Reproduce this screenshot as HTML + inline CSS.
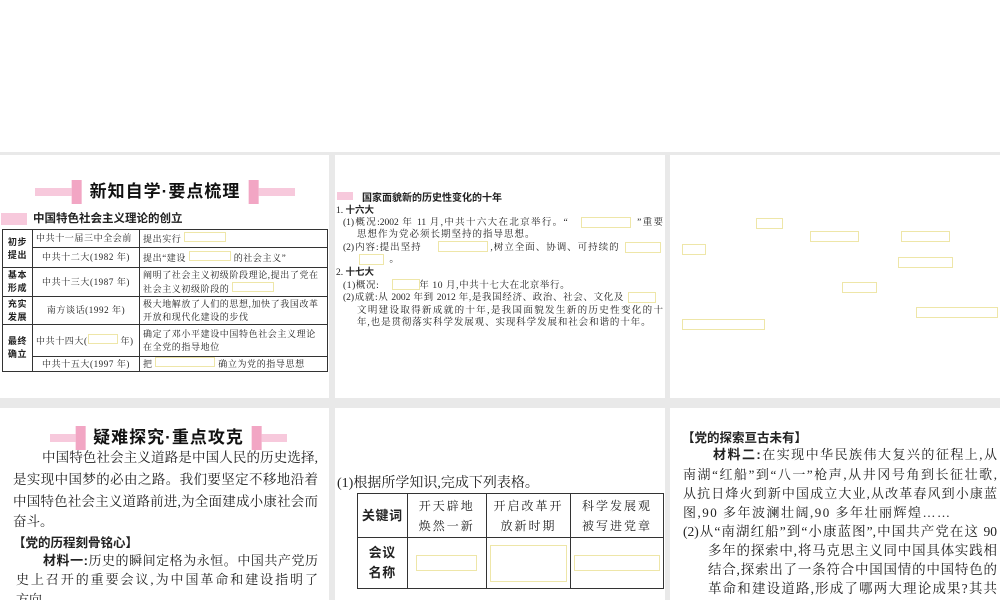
<!DOCTYPE html>
<html><head><meta charset="utf-8"><style>
*{margin:0;padding:0;box-sizing:border-box}
body{width:1000px;height:600px;background:#e9e9e9;position:relative;overflow:hidden;font-family:"Liberation Serif","Noto Serif CJK SC",serif;color:#222}
.top{position:absolute;left:0;top:0;width:1000px;height:152px;background:#fff}
.p{position:absolute;background:#fff;overflow:hidden}
.a{position:absolute;white-space:nowrap}
.j{position:absolute;white-space:nowrap;text-align:justify;text-align-last:justify;overflow:hidden}
.bx{position:absolute;border:1.5px solid #eee6a8;background:#fff}
.ban{position:absolute;height:24px;background:linear-gradient(#f7c9dc,#f7c9dc) center/100% 8px no-repeat}
.ban span{position:absolute;left:50%;top:0;transform:translateX(-50%);white-space:nowrap;background:#fff;border-left:10px solid #f2a6c4;border-right:10px solid #f2a6c4;padding:0 8px;height:24px;line-height:24px;font-family:"Liberation Sans","Noto Sans CJK SC",sans-serif;font-weight:bold;font-size:17px;letter-spacing:1px;color:#111}
.b{font-family:"Liberation Sans","Noto Sans CJK SC",sans-serif;font-weight:bold}
table{border-collapse:collapse;position:absolute}
td{border:1px solid #333;font-size:9px;padding:0 3px;line-height:13px;letter-spacing:0.6px}
.s{font-size:9.5px;line-height:12px}
.m{font-size:13.5px;line-height:20px}
.n{font-size:13px;line-height:18px}
</style></head><body>
<div class="top"></div>

<div class="p" style="left:0;top:155px;width:329px;height:243px">
 <div class="ban" style="left:35px;top:25px;width:260px"><span>新知自学·要点梳理</span></div>
 <div class="a" style="left:1px;top:58px;width:26px;height:12px;background:#f7c9dc"></div>
 <div class="a b" style="left:33px;top:55px;font-size:11.5px">中国特色社会主义理论的创立</div>
 <table style="left:2px;top:74px;width:326px;height:141px">
  <tr style="height:18px"><td rowspan="2" class="b" style="width:30px;text-align:center">初步<br>提出</td><td style="width:107px">中共十一届三中全会前</td><td>提出实行 <span style="display:inline-block;width:42px;height:10px;border:1px solid #eee6a8"></span></td></tr>
  <tr style="height:20px"><td style="text-align:center">中共十二大(1982 年)</td><td>提出“建设 <span style="display:inline-block;width:42px;height:10px;border:1px solid #eee6a8"></span> 的社会主义”</td></tr>
  <tr style="height:29px"><td class="b" style="text-align:center">基本<br>形成</td><td style="text-align:center">中共十三大(1987 年)</td><td>阐明了社会主义初级阶段理论,提出了党在社会主义初级阶段的 <span style="display:inline-block;width:42px;height:10px;border:1px solid #eee6a8"></span></td></tr>
  <tr style="height:28px"><td class="b" style="text-align:center">充实<br>发展</td><td style="text-align:center">南方谈话(1992 年)</td><td>极大地解放了人们的思想,加快了我国改革开放和现代化建设的步伐</td></tr>
  <tr style="height:32px"><td rowspan="2" class="b" style="text-align:center">最终<br>确立</td><td>中共十四大(<span style="display:inline-block;width:30px;height:10px;border:1px solid #eee6a8"></span> 年)</td><td>确定了邓小平建设中国特色社会主义理论在全党的指导地位</td></tr>
  <tr style="height:14px"><td style="text-align:center">中共十五大(1997 年)</td><td>把 <span style="display:inline-block;width:60px;height:10px;border:1px solid #eee6a8"></span> 确立为党的指导思想</td></tr>
 </table>
</div>

<div class="p" style="left:335px;top:155px;width:330px;height:243px">
 <div class="a" style="left:2px;top:37px;width:16px;height:8px;background:#f7c9dc"></div>
 <div class="a b" style="left:27px;top:34px;font-size:10px">国家面貌新的历史性变化的十年</div>
 <div class="a s" style="left:1px;top:50px">1. <b class="b">十六大</b></div>
 <div class="j s" style="left:8px;top:62px;width:320px">(1)概况:2002 年 11 月,中共十六大在北京举行。“ <span style="display:inline-block;width:62px"></span> ”重要</div>
 <div class="a s" style="left:22px;top:74px;letter-spacing:1px">思想作为党必须长期坚持的指导思想。</div>
 <div class="j s" style="left:8px;top:87px;width:320px">(2)内容:提出坚持 <span style="display:inline-block;width:62px"></span> ,树立全面、协调、可持续的 <span style="display:inline-block;width:40px"></span></div>
 <div class="a s" style="left:22px;top:99px"><span style="display:inline-block;width:30px"></span> 。</div>
 <div class="a s" style="left:1px;top:112px">2. <b class="b">十七大</b></div>
 <div class="a s" style="left:8px;top:125px;letter-spacing:0.6px">(1)概况: <span style="display:inline-block;width:34px"></span> 年 10 月,中共十七大在北京举行。</div>
 <div class="j s" style="left:8px;top:137px;width:320px">(2)成就:从 2002 年到 2012 年,是我国经济、政治、社会、文化及 <span style="display:inline-block;width:36px"></span></div>
 <div class="j s" style="left:22px;top:150px;width:306px">文明建设取得新成就的十年,是我国面貌发生新的历史性变化的十</div>
 <div class="a s" style="left:22px;top:162px;letter-spacing:0.9px">年,也是贯彻落实科学发展观、实现科学发展和社会和谐的十年。</div>
 <div class="bx" style="left:246px;top:62px;width:50px;height:11px"></div>
 <div class="bx" style="left:103px;top:86px;width:50px;height:11px"></div>
 <div class="bx" style="left:290px;top:87px;width:36px;height:11px"></div>
 <div class="bx" style="left:24px;top:99px;width:25px;height:11px"></div>
 <div class="bx" style="left:57px;top:124px;width:28px;height:11px"></div>
 <div class="bx" style="left:293px;top:137px;width:28px;height:11px"></div>
</div>

<div class="p" style="left:670px;top:155px;width:330px;height:243px">
 <div class="bx" style="left:86px;top:63px;width:27px;height:11px"></div>
 <div class="bx" style="left:140px;top:76px;width:49px;height:11px"></div>
 <div class="bx" style="left:231px;top:76px;width:49px;height:11px"></div>
 <div class="bx" style="left:12px;top:89px;width:24px;height:11px"></div>
 <div class="bx" style="left:228px;top:102px;width:55px;height:11px"></div>
 <div class="bx" style="left:172px;top:127px;width:35px;height:11px"></div>
 <div class="bx" style="left:246px;top:152px;width:82px;height:11px"></div>
 <div class="bx" style="left:12px;top:164px;width:83px;height:11px"></div>
</div>

<div class="p" style="left:0;top:408px;width:329px;height:192px">
 <div class="ban" style="left:50px;top:18px;width:237px"><span>疑难探究·重点攻克</span></div>
 <div class="j m" style="left:42px;top:40px;width:276px">中国特色社会主义道路是中国人民的历史选择,</div>
 <div class="j m" style="left:13px;top:62px;width:305px">是实现中国梦的必由之路。我们要坚定不移地沿着</div>
 <div class="j m" style="left:13px;top:84px;width:305px">中国特色社会主义道路前进,为全面建成小康社会而</div>
 <div class="a m" style="left:13px;top:104px">奋斗。</div>
 <div class="a b" style="left:13px;top:124px;font-size:12.5px">【党的历程刻骨铭心】</div>
 <div class="j n" style="left:43px;top:144px;width:275px"><b class="b">材料一:</b>历史的瞬间定格为永恒。中国共产党历</div>
 <div class="j n" style="left:16px;top:163px;width:302px">史上召开的重要会议,为中国革命和建设指明了</div>
 <div class="a n" style="left:16px;top:183px">方向。</div>
</div>

<div class="p" style="left:335px;top:408px;width:330px;height:192px">
 <div class="a" style="left:2px;top:64px;font-size:14px">(1)根据所学知识,完成下列表格。</div>
 <table style="left:22px;top:85px;width:307px;height:96px">
  <tr style="height:44px"><td class="b" style="width:51px;text-align:center;font-size:13px;border-width:1.5px">关键词</td><td style="width:80px;text-align:center;font-size:12px;line-height:20px;letter-spacing:2px">开天辟地<br>焕然一新</td><td style="width:80px;text-align:center;font-size:12px;line-height:20px;letter-spacing:2px">开启改革开<br>放新时期</td><td style="text-align:center;font-size:12px;line-height:20px;letter-spacing:2px">科学发展观<br>被写进党章</td></tr>
  <tr><td class="b" style="text-align:center;font-size:13px;line-height:20px">会议<br>名称</td><td><div style="width:61px;height:16px;border:1.5px solid #eee6a8;margin:0 auto"></div></td><td><div style="width:77px;height:37px;border:1.5px solid #eee6a8;margin:0 auto"></div></td><td><div style="width:86px;height:16px;border:1.5px solid #eee6a8;margin:0 auto"></div></td></tr>
 </table>
</div>

<div class="p" style="left:670px;top:408px;width:330px;height:192px">
 <div class="a b" style="left:12px;top:19px;font-size:12.5px">【党的探索亘古未有】</div>
 <div class="j n" style="left:43px;top:38px;width:284px"><b class="b">材料二:</b>在实现中华民族伟大复兴的征程上,从</div>
 <div class="j n" style="left:13px;top:58px;width:314px">南湖“红船”到“八一”枪声,从井冈号角到长征壮歌,</div>
 <div class="j n" style="left:13px;top:77px;width:314px">从抗日烽火到新中国成立大业,从改革春风到小康蓝</div>
 <div class="a n" style="left:13px;top:96px;letter-spacing:1.5px">图,90 多年波澜壮阔,90 多年壮丽辉煌……</div>
 <div class="j n" style="left:13px;top:115px;width:314px;font-size:13.5px">(2)从“南湖红船”到“小康蓝图”,中国共产党在这 90</div>
 <div class="j n" style="left:38px;top:134px;width:289px;font-size:13.5px">多年的探索中,将马克思主义同中国具体实践相</div>
 <div class="j n" style="left:38px;top:153px;width:289px;font-size:13.5px">结合,探索出了一条符合中国国情的中国特色的</div>
 <div class="j n" style="left:38px;top:172px;width:289px;font-size:13.5px">革命和建设道路,形成了哪两大理论成果?其共</div>
 <div class="a n" style="left:38px;top:191px;font-size:13.5px">同特点是什么?</div>
</div>
</body></html>
